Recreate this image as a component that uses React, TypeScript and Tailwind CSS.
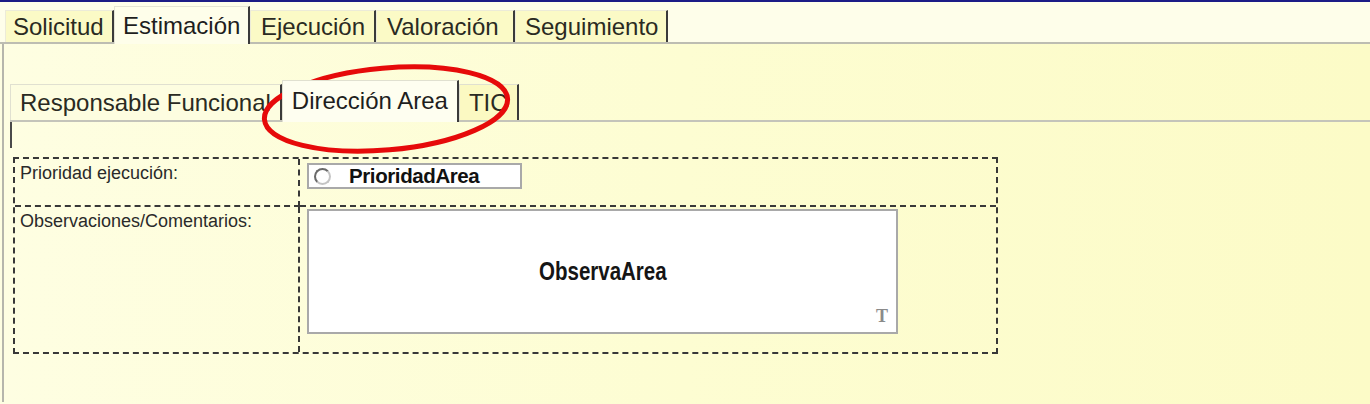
import type { ReactNode } from "react";

type TabProps = { label: string; active?: boolean; w: string };

// upper tab strip of the request form
function TopTab({ label, active, w }: TabProps) {
  if (active) {
    return (
      <div className={"relative z-10 -mb-[2px] h-[38px] bg-[#fefeea] border-t border-l border-[#e4e4d4] border-r-2 border-r-[#3a3a3a] text-[24px] leading-[38px] text-[#1e1e1e] " + w}>
        {label}
      </div>
    );
  }
  return (
    <div className={"h-[32px] bg-[#fbfac6] border-t border-l border-[#ecebd8] border-r-2 border-r-[#3a3a3a] text-[24px] leading-[32px] text-[#2a2a22] " + w}>
      {label}
    </div>
  );
}

// nested tabs inside "Estimación"
function SubTab({ label, active, yellow }: { label: string; active?: boolean; yellow?: boolean }) {
  if (active) {
    return (
      <div className="relative z-10 -mb-[2px] h-[42px] px-[9px] bg-[#fefef0] border-t border-l border-[#e0e0d0] border-r-2 border-r-[#3a3a3a] text-[24px] leading-[40px] text-[#1e1e1e]">
        {label}
      </div>
    );
  }
  return (
    <div
      className={
        "h-[36px] px-[9px] border-t border-l border-[#e0e0d0] border-r-2 border-r-[#3a3a3a] text-[24px] leading-[36px] text-[#2a2a22] " +
        (yellow ? "bg-[#fbf9c2]" : "bg-[#fdfde0]")
      }
    >
      {label}
    </div>
  );
}

function Cell({ children, className = "" }: { children?: ReactNode; className?: string }) {
  return <div className={"border-dashed border-[#383838] " + className}>{children}</div>;
}

export default function App() {
  return (
    <div className="relative w-[1370px] h-[404px] overflow-hidden bg-gradient-to-r from-[#fefee2] via-[#fdfdd2] to-[#fcfbc7] font-['Liberation_Sans',Arial,sans-serif]">
      <div className="h-[2px] bg-[#1c1c86]" />

      <div className="h-[42px] flex items-end pl-[5px] bg-[#fefeea] border-b-2 border-[#bdbdb2]">
        <TopTab label="Solicitud" w="w-[109px] pl-[7px]" />
        <TopTab label="Estimación" active w="w-[136px] pl-[8px]" />
        <TopTab label="Ejecución" w="w-[126px] pl-[10px]" />
        <TopTab label="Valoración" w="w-[139px] pl-[10px]" />
        <TopTab label="Seguimiento" w="w-[153px] pl-[9px]" />
      </div>

      <div className="ml-[2px] h-[358px] border-l-2 border-[#b6b6ac] pl-[6px] pt-[36px]">
        <div className="h-[42px] flex items-end border-b-2 border-[#c4c4ba]">
          <SubTab label="Responsable Funcional" />
          <SubTab label="Dirección Area" active />
          <SubTab label="TIC" yellow />
        </div>
        <div className="w-[2px] h-[26px] bg-[#4a4a4a]" />

        <div className="ml-[3px] mt-[9px] w-[985px] grid grid-cols-[285px_1fr] grid-rows-[48px_145px] border-2 border-dashed border-[#383838] text-[18px] text-[#2a2a2a]">
          <Cell className="border-r-2 border-b-2 pl-[5px] pt-[4px] leading-[20px]">Prioridad ejecución:</Cell>
          <Cell className="border-b-2 pl-[7px] pt-[4px]">
            <div className="w-[215px] h-[26px] bg-white border-2 border-[#a9a9a9] flex items-center pl-[5px]">
              <span className="block shrink-0 w-[17px] h-[17px] rounded-full border-2 border-[#6a6a6a] border-r-[#c4c4c4] border-b-[#c4c4c4] bg-white" />
              <span className="ml-[18px] text-[20.5px] font-bold tracking-[-0.4px] text-[#111]">PrioridadArea</span>
            </div>
          </Cell>
          <Cell className="border-r-2 pl-[5px] pt-[4px] leading-[20px]">Observaciones/Comentarios:</Cell>
          <Cell className="pl-[7px] pt-[2px]">
            <div className="relative w-[591px] h-[125px] bg-white border-2 border-[#a9a9a9] flex items-center justify-center">
              <span className="inline-block scale-x-[0.82] text-[25px] font-bold text-[#151515]">ObservaArea</span>
              <span className="absolute right-[8px] bottom-[2px] font-['Liberation_Serif',serif] font-bold text-[18px] text-[#8a8a8a]">T</span>
            </div>
          </Cell>
        </div>
      </div>

      {/* red marker drawn around the selected sub-tab */}
      <svg className="absolute left-[250px] top-[55px]" width="280" height="110" viewBox="0 0 280 110">
        <ellipse cx="136" cy="54" rx="122" ry="41" fill="none" stroke="#e60a0a" strokeWidth="5" transform="rotate(-5 136 54)" />
      </svg>
    </div>
  );
}
